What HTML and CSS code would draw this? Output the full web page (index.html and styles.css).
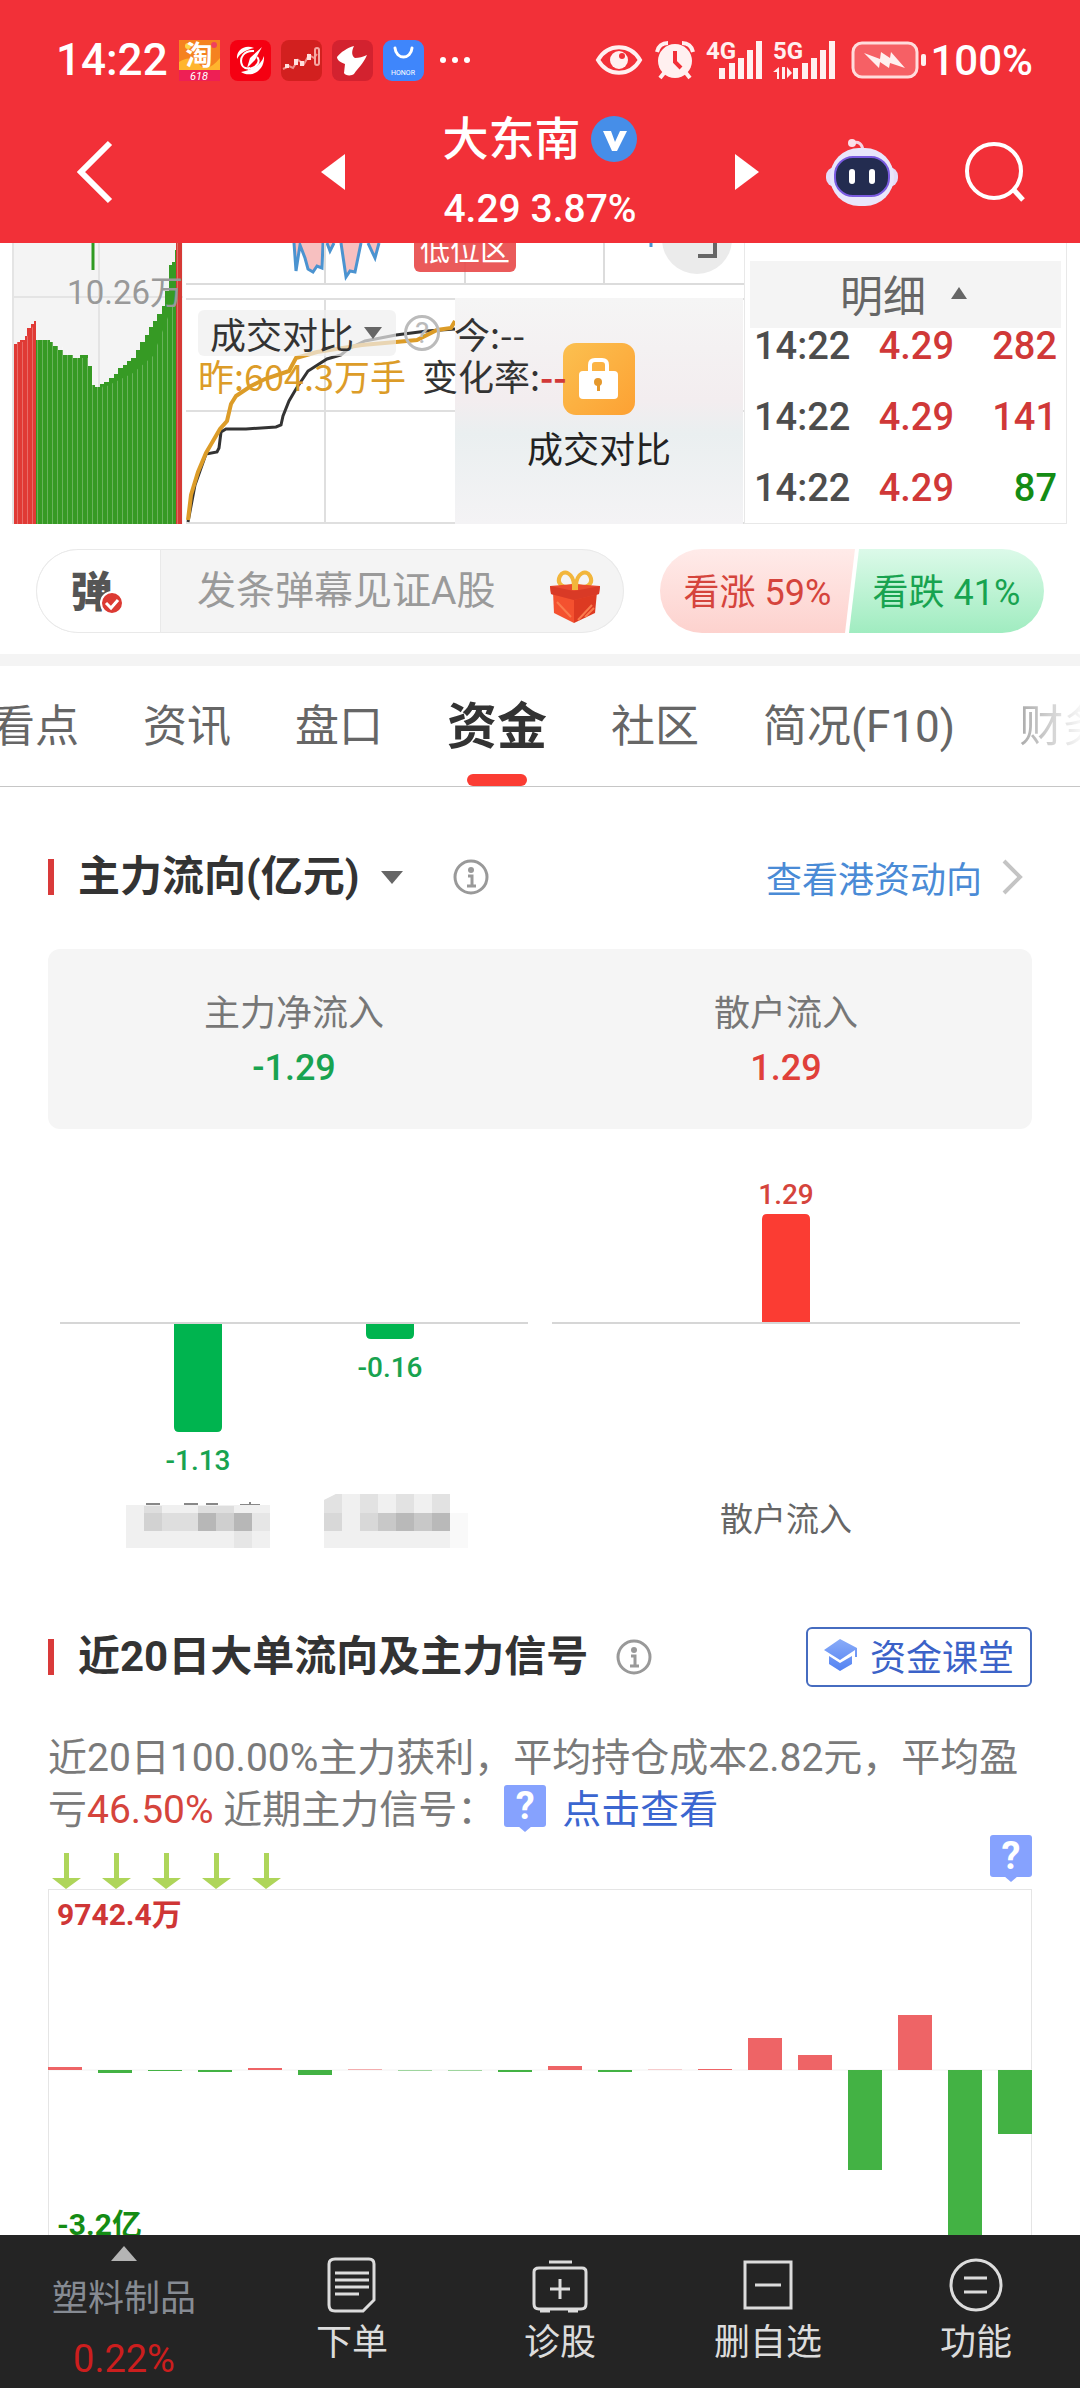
FILE: index.html
```html
<!DOCTYPE html>
<html lang="zh-CN">
<head>
	<meta charset="UTF-8">
	<meta name="viewport" content="width=device-width">
	<title>大东南 资金</title>
	<link rel="stylesheet" href="styles.css">
</head>
<body>
	<header class="top">
		<div class="status">
			<span class="clock">14:22</span>
			<div class="apps">
				<svg width="41" height="41" viewBox="0 0 41 41">
					<rect width="41" height="41" fill="#f58220"/>
					<path d="M0 22q12-8 20 2t21-6v13H0z" fill="#ffb52e"/>
					<circle cx="9" cy="6" r="3" fill="#ffd54a"/>
					<circle cx="35" cy="5" r="3" fill="#f0405c"/>
					<rect y="30" width="41" height="11" fill="#ee1f55"/>
					<text x="20" y="25" class="tao">淘</text>
					<text x="20" y="40" class="tiny">618</text>
				</svg>
				<svg width="41" height="41" viewBox="0 0 41 41">
					<rect width="41" height="41" rx="8" fill="#f50012"/>
					<path d="M24 8C15 4 6 10 7 19c3-6 9-9 17-11z" fill="#fff"/>
					<path d="M11 32c9 6 24 0 23-16-3 9-11 14-23 16z" fill="#fff"/>
					<path d="M24 11C14 10 9 18 12 25c1 3 5 4 8 3M27 17c4 4 0 11-9 12" fill="none" stroke="#fff" stroke-width="2"/>
					<path d="M32 7L20 18l-3 10 8-8z" fill="#fff"/>
				</svg>
				<svg width="41" height="41" viewBox="0 0 41 41">
					<rect width="41" height="41" rx="8" fill="#d2201f"/>
					<path d="M2 29l6-3 4 2 5-8 6 4 5-9 5 3 3-4" fill="none" stroke="#f0908c" stroke-width="2"/>
					<path d="M6 24v4M15 19v6M21 21v5M28 14v6" stroke="#ffe0de" stroke-width="4"/>
					<rect x="34" y="8" width="4" height="17" rx="2" fill="none" stroke="#f6a8a4" stroke-width="2"/>
				</svg>
				<svg width="41" height="41" viewBox="0 0 41 41">
					<rect width="41" height="41" rx="8" fill="#d3222f"/>
					<path d="M22 6c-3 6-2 10 1 12 4 0 8-1 12-3-4 9-9 13-13 19-2 2-9 2-10-1l1-9c-5-2-8-4-8-7 4-5 10-9 17-11z" fill="#fff"/>
				</svg>
				<svg width="41" height="41" viewBox="0 0 41 41">
					<rect width="41" height="41" rx="9" fill="#3f86fb"/>
					<path d="M12 8c1 12 16 12 17 0" fill="none" stroke="#fff" stroke-width="3" stroke-linecap="round"/>
					<text x="20" y="35" class="honor">HONOR</text>
				</svg>
			</div>
			<svg class="more" width="30" height="8" viewBox="0 0 30 8" fill="#fff"><circle cx="3" cy="4" r="3"/><circle cx="15" cy="4" r="3"/><circle cx="27" cy="4" r="3"/></svg>
			<svg class="eye" width="46" height="32" viewBox="0 0 46 32">
				<path d="M2 16C12-1 34-1 44 16 34 33 12 33 2 16z" fill="none" stroke="#fff0f0" stroke-width="4"/>
				<circle cx="23" cy="16" r="9" fill="#fff0f0"/><circle cx="26" cy="12" r="3" fill="#f23038"/>
			</svg>
			<svg class="alarm" width="38" height="38" viewBox="0 0 38 38">
				<circle cx="19" cy="20" r="17" fill="#fff0f0"/>
				<path d="M1 11q2-9 11-9M37 11q-2-9-11-9M8 32l-4 5M30 32l4 5" stroke="#fff0f0" stroke-width="4" fill="none"/>
				<path d="M19 10v11l6 6" stroke="#f23038" stroke-width="4" fill="none"/>
			</svg>
			<svg class="signal4" width="58" height="38" viewBox="0 0 58 38" fill="#fff0f0">
				<text x="0" y="18">4G</text>
				<path d="M13 27h6v11h-6zM23 22h6v16h-6zM32 17h6v21h-6zM41 9h6v29h-6zM50 0h6v38h-6z"/>
			</svg>
			<svg class="signal5" width="64" height="38" viewBox="0 0 64 38" fill="#fff0f0">
				<text x="0" y="18">5G</text>
				<path d="M0 31l6-5v12H4v-7zM9 26h3v12H9zM14 26l5 6-5 5zM20 27h5v11h-5zM29 22h6v16h-6zM38 17h6v21h-6zM47 9h6v29h-6zM56 0h6v38h-6z"/>
			</svg>
			<svg class="battery" width="76" height="38" viewBox="0 0 76 38">
				<rect x="2" y="2" width="64" height="34" rx="9" fill="#f66065" stroke="#ffdcdc" stroke-width="3"/>
				<path d="M13 12l16 6 1-7 9 6 1-6 14 16-15-5-1 5-9-6-1 6z" fill="#fff0f0"/>
				<rect x="70" y="13" width="5" height="12" rx="2" fill="#fff0f0"/>
			</svg>
			<span class="clock level">100%</span>
		</div>
		<nav class="title-bar">
			<div class="side left">
				<button aria-label="返回"><svg width="36" height="64" viewBox="0 0 36 64"><path d="M33 3L4 32l29 29" fill="none" stroke="#fff" stroke-width="6"/></svg></button>
				<button aria-label="上一只"><svg width="24" height="36" viewBox="0 0 24 36"><path d="M24 0v36L0 18z" fill="#fff"/></svg></button>
			</div>
			<div class="stock">
				<h1>大东南
					<svg width="47" height="47" viewBox="0 0 47 47"><circle cx="23" cy="23" r="23" fill="#468ee8"/><path d="M12 15h8l4 11 5-11h7L26 35h-5z" fill="#fff"/></svg>
				</h1>
				<p>4.29 3.87%</p>
			</div>
			<div class="side right">
				<button aria-label="下一只"><svg width="24" height="36" viewBox="0 0 24 36"><path d="M0 0v36l24-18z" fill="#fff"/></svg></button>
				<button aria-label="助手">
					<svg width="72" height="68" viewBox="0 0 72 68">
						<path d="M26 5q10-3 11 8" fill="none" stroke="#f6d3e2" stroke-width="3"/>
						<circle cx="26" cy="5" r="4" fill="#fbe0ea"/>
						<rect x="0" y="29" width="72" height="20" rx="9" fill="#e4dcf8"/>
						<rect x="4" y="10" width="64" height="58" rx="29" fill="#e9e6fb"/>
						<rect x="9" y="19" width="54" height="39" rx="18" fill="#232c50" stroke="#7a5be0" stroke-width="2"/>
						<rect x="23" y="31" width="6" height="15" rx="3" fill="#fff"/><rect x="43" y="31" width="6" height="15" rx="3" fill="#fff"/>
					</svg>
				</button>
				<button aria-label="搜索"><svg width="60" height="60" viewBox="0 0 60 60"><circle cx="29" cy="29" r="27" fill="none" stroke="#fff" stroke-width="4"/><path d="M48 47l10 11" stroke="#fff" stroke-width="5"/></svg></button>
			</div>
		</nav>
	</header>

	<main>
		<section class="quotes">
			<div class="volume">
				<svg viewBox="0 0 171 281" preserveAspectRatio="none">
					<defs>
						<pattern id="stripe" width="5" height="10" patternUnits="userSpaceOnUse"><rect width="1" height="10" fill="#fff" opacity=".25"/></pattern>
					</defs>
					<path d="M0 54h171M87 0v281M1 0v281" stroke="#e4e4e4" stroke-width="2"/>
					<path d="M81 0v27" stroke="#2f9a22" stroke-width="3"/>
					<path d="M2 281V101h3v-2h3v-2h5v-4h2v-8h4v-4h3v-3h2v203z" fill="#e03a35"/>
					<path d="M24 281V78v19h14v2h3v4h5v4h5v5h10v3h7v-3h8v11h4v19h3v2h5v-3h4v-2h5v-4h5v-4h4v-6h5v-3h4v-4h4v-3h5v-8h4v-8h5v-7h4v-8h4v-6h4v-7h5v-8h3v-15h4v-26h3V19h3V7h3v274z" fill="#369a24"/>
					<path d="M164 0h6v281h-6z" fill="#d63a35"/>
					<path d="M2 281V99h10l12-21v19h17l25 18h10l15 30 30-15 20-17 23-60V0h6v281z" fill="url(#stripe)"/>
				</svg>
				<span class="vol-label">10.26万</span>
			</div>
			<div class="middle">
				<div class="signal-chart">
					<svg viewBox="0 0 558 42" preserveAspectRatio="none">
						<path d="M108 0l2 28 4-26 5 13 3 11 5 3 4-6 5 2 1-25zM141 0l3 8 4-8zM155 0l5 34 4-6 5 1 6-29zM182 0l7 15 4-15z" fill="#f7c0c0"/>
						<path d="M108 0l2 28 4-26 5 13 3 11 5 3 4-6 5 2 1-25M141 0l3 8 4-8M155 0l5 34 4-6 5 1 6-29M182 0l7 15 4-15M465 0v4" fill="none" stroke="#4b93d0" stroke-width="3"/>
						<path d="M139 0v41M279 0v41M418 0v41M0 41h558" stroke="#dcdcdc" stroke-width="2"/>
						<circle cx="511" cy="-4" r="35" fill="#ebebeb"/>
						<path d="M512 13h17V0" fill="none" stroke="#666" stroke-width="4"/>
					</svg>
					<span class="tag">低位区</span>
				</div>
				<div class="compare">
					<svg viewBox="0 0 558 226" preserveAspectRatio="none">
						<path d="M0 1h558M0 113h558M0 225h558M139 0v226M279 0v226" stroke="#dfdfdf" stroke-width="2"/>
						<path d="M2 224l7-37 11-31 11-2 2-4 2-16 5-3h20l30-2 5-2 2-9 6-15 7-12 12-18 19-12 14-4 7-6 17-8 31-6 31-4 28-2" fill="none" stroke="#333" stroke-width="3"/>
						<path d="M2 222l3-25 7-23 8-19 7-12 7-12 7-8 4-17 5-8 15-10 14-7 24-8 7-13 21-6 45-7 34-3 21-2 20-10 14-2 4-7" fill="none" stroke="#dc9c28" stroke-width="4"/>
					</svg>
					<div class="locked">
						<svg width="72" height="72" viewBox="0 0 72 72">
							<defs><linearGradient id="gold" x2="1" y2="1"><stop stop-color="#fbc050"/><stop offset="1" stop-color="#fda133"/></linearGradient></defs>
							<rect width="72" height="72" rx="13" fill="url(#gold)"/>
							<path d="M27 30v-8q0-5 5-5h7q5 0 5 5v8" fill="none" stroke="#fff" stroke-width="4"/>
							<rect x="16" y="28" width="39" height="28" rx="4" fill="#fff"/>
							<circle cx="35" cy="39" r="4" fill="#e5982c"/><path d="M34 39h3v9h-3z" fill="#e5982c"/>
						</svg>
						<span>成交对比</span>
					</div>
					<div class="legend">
						<div class="line">
							<button class="picker">成交对比 <i class="tri-down"></i></button>
							<span class="help">?</span>
							<span>今:--</span>
						</div>
						<div class="line">
							<span class="gold">昨:604.3万手</span>
							<span>变化率:<b>--</b></span>
						</div>
					</div>
				</div>
			</div>
			<div class="trades">
				<button class="trades-head">明细 <svg width="16" height="12" viewBox="0 0 16 12"><path d="M8 0l8 12H0z" fill="#666"/></svg></button>
				<div class="trades-list">
					<table>
						<tr><td>14:22</td><td class="up">4.29</td><td class="up">282</td></tr>
						<tr><td>14:22</td><td class="up">4.29</td><td class="up">141</td></tr>
						<tr><td>14:22</td><td class="up">4.29</td><td class="down">87</td></tr>
					</table>
				</div>
			</div>
		</section>

		<section class="danmu">
			<div class="danmu-box">
				<button class="danmu-switch" aria-label="弹幕开关">弹
					<svg width="24" height="24" viewBox="0 0 24 24"><circle cx="12" cy="12" r="11" fill="#dc3a33" stroke="#fff" stroke-width="2"/><path d="M6 12l5 5 7-8" fill="none" stroke="#fff" stroke-width="3"/></svg>
				</button>
				<input type="text" aria-label="弹幕" placeholder="发条弹幕见证A股">
				<svg class="gift" width="50" height="54" viewBox="0 0 50 54">
					<path d="M24 15C14 20 6 14 10 6c4-7 13-3 14 9zM26 15c10 5 18-1 14-9-4-7-13-3-14 9z" fill="none" stroke="#f2b63c" stroke-width="4"/>
					<path d="M3 22l21 7v24L4 43z" fill="#f4512f"/><path d="M47 22l-23 7v24l21-10z" fill="#dd3a22"/>
					<path d="M0 16l24-2 26 2-1 8-25 6L1 24z" fill="#ea4a2e"/>
					<path d="M0 16l24 5 26-5-1 8-25 6L1 24z" fill="#d93a26"/>
					<path d="M28 50l14-15M35 47l9-9M7 32l14 15" stroke="#fa7a4c" stroke-width="2"/>
					<path d="M22 11h6v9h-6z" fill="#f2b63c"/>
				</svg>
			</div>
			<div class="vote">
				<button class="bull">看涨 59%</button>
				<button class="bear">看跌 41%</button>
			</div>
		</section>

		<nav class="tabs">
			<a href="#">看点</a>
			<a href="#">资讯</a>
			<a href="#">盘口</a>
			<a href="#" class="active">资金</a>
			<a href="#">社区</a>
			<a href="#">简况(F10)</a>
			<a href="#">财务</a>
		</nav>

		<section class="block">
			<div class="block-head">
				<h2>主力流向(亿元)</h2>
				<i class="tri-down"></i>
				<svg class="info" width="36" height="36" viewBox="0 0 36 36"><circle cx="18" cy="18" r="16" fill="none" stroke="#999" stroke-width="3"/><circle cx="18" cy="11" r="3" fill="#999"/><path d="M15 17h4v10M14 27h9" fill="none" stroke="#999" stroke-width="3"/></svg>
				<a href="#" class="hk">查看港资动向
					<svg width="22" height="36" viewBox="0 0 22 36"><path d="M2 2l16 16L2 34" fill="none" stroke="#c4c4c4" stroke-width="4"/></svg>
				</a>
			</div>
			<dl class="summary">
				<div><dt>主力净流入</dt><dd class="green">-1.29</dd></div>
				<div><dt>散户流入</dt><dd class="red">1.29</dd></div>
			</dl>
			<svg class="flow" viewBox="0 0 984 438">
				<path d="M12 194h468M504 194h468" stroke="#d6d6d6" stroke-width="2"/>
				<path d="M126 195h48v103q0 5-5 5h-38q-5 0-5-5zM318 195h48v10q0 5-5 5h-38q-5 0-5-5z" fill="#00b44f"/>
				<path d="M714 193V90q0-5 5-5h38q5 0 5 5v103z" fill="#fb3c33"/>
				<g class="num">
					<text x="738" y="75" fill="#d5443c">1.29</text>
					<text x="150" y="341" fill="#18a350">-1.13</text>
					<text x="342" y="248" fill="#18a350">-0.16</text>
				</g>
				<text x="738" y="402" class="name">散户流入</text>
				<!-- 马赛克 -->
				<path d="M98 375h14M136 375h14M158 375h12M192 376h20M202 373v6" stroke="#888" stroke-width="2"/>
				<g>
					<path d="M78 376h144v43H78z" fill="#f0f0f0"/>
					<path d="M96 377h18v7H96zM150 377h36v7h-36z" fill="#dedede"/>
					<path d="M96 384h18v18H96z" fill="#d2d2d2"/><path d="M114 384h36v18h-36z" fill="#dedede"/>
					<path d="M150 384h18v18h-18zM186 384h18v18h-18z" fill="#b7b7b7"/><path d="M168 384h18v18h-18z" fill="#cfcfcf"/>
					<path d="M204 384h18v18h-18zM186 402h18v17h-18z" fill="#e6e6e6"/>
				</g>
				<g>
					<path d="M276 371l12-6h114v54H276z" fill="#f0f0f0"/>
					<path d="M276 371l12-6h6v19h-18zM312 365h18v19h-18zM348 365h18v19h-18zM384 365h18v19h-18z" fill="#e2e2e2"/>
					<path d="M276 384h18v18h-18zM312 384h18v18h-18z" fill="#d8d8d8"/><path d="M330 384h18v18h-18zM366 384h18v18h-18z" fill="#c8c8c8"/>
					<path d="M348 384h18v18h-18zM384 384h18v18h-18z" fill="#b9b9b9"/><path d="M402 384h18v35h-18z" fill="#f9f9f9"/>
				</g>
			</svg>
		</section>

		<section class="block">
			<div class="block-head">
				<h2>近20日大单流向及主力信号</h2>
				<svg class="info near" width="36" height="36" viewBox="0 0 36 36"><circle cx="18" cy="18" r="16" fill="none" stroke="#999" stroke-width="3"/><circle cx="18" cy="11" r="3" fill="#999"/><path d="M15 17h4v10M14 27h9" fill="none" stroke="#999" stroke-width="3"/></svg>
				<button class="lesson">
					<svg width="34" height="32" viewBox="0 0 34 32">
						<defs><linearGradient id="cap" x2="0" y2="1"><stop stop-color="#8aacf8"/><stop offset="1" stop-color="#5382f2"/></linearGradient></defs>
						<path d="M16 0l17 9v9h-2v-7L16 21 0 11zM5 17l11 7 12-7v8l-12 7-11-7z" fill="url(#cap)"/>
					</svg>
					资金课堂
				</button>
			</div>
			<p class="desc">近20日100.00%主力获利，平均持仓成本2.82元，平均盈亏<em>46.50%</em> 近期主力信号：<span class="mark">?</span><a href="#">点击查看</a></p>
			<div class="signals">
				<svg width="242" height="36" viewBox="0 0 242 36">
					<defs><path id="arrow" d="M12 0h5v25h12L14 36 0 25h12z" fill="#aed55a"/></defs>
					<use href="#arrow" x="4"/><use href="#arrow" x="54"/><use href="#arrow" x="104"/><use href="#arrow" x="154"/><use href="#arrow" x="204"/>
				</svg>
				<span class="mark">?</span>
			</div>
			<div class="big-orders">
				<span class="max">9742.4万</span>
				<svg viewBox="0 0 984 380">
					<path d="M0 180h984" stroke="#f2f2f2" stroke-width="1"/>
					<g fill="#ee6466">
						<rect x="0" y="177" width="34" height="3"/><rect x="200" y="178" width="34" height="2"/>
						<rect x="300" y="179" width="34" height="1" opacity=".5"/><rect x="500" y="176" width="34" height="4"/>
						<rect x="600" y="179" width="34" height="1" opacity=".3"/><rect x="650" y="179" width="34" height="1"/>
						<rect x="700" y="148" width="34" height="32"/><rect x="750" y="165" width="34" height="15"/>
						<rect x="850" y="125" width="34" height="55"/>
					</g>
					<g fill="#43b244">
						<rect x="50" y="180" width="34" height="3"/><rect x="100" y="180" width="34" height="1"/>
						<rect x="150" y="180" width="34" height="2"/><rect x="250" y="180" width="34" height="5"/>
						<rect x="350" y="180" width="34" height="1" opacity=".5"/><rect x="400" y="180" width="34" height="1" opacity=".5"/>
						<rect x="450" y="180" width="34" height="2"/><rect x="550" y="180" width="34" height="2"/>
						<rect x="800" y="180" width="34" height="100"/><rect x="900" y="180" width="34" height="180"/>
						<rect x="950" y="180" width="34" height="64"/>
					</g>
				</svg>
				<span class="min">-3.2亿</span>
			</div>
		</section>
	</main>

	<footer class="bottom">
		<a href="#" class="sector">
			<svg width="26" height="15" viewBox="0 0 26 15"><path d="M13 0l13 15H0z" fill="#b4b4b4"/></svg>
			<span>塑料制品</span>
			<span class="pct">0.22%</span>
		</a>
		<a href="#">
			<svg viewBox="0 0 56 56"><path d="M11 2h34q5 0 5 5v36L39 54H11q-6 0-6-6V7q0-5 6-5zM11 16h34M11 23h34M11 30h34M11 37h24"/></svg>
			下单
		</a>
		<a href="#">
			<svg viewBox="0 0 56 56"><path d="M17 5h23M7 11h43q4 0 4 4v32q0 5-5 5H7q-5 0-5-5V15q0-4 5-4zM28 22v20M18 32h20M8 54h10M36 54h10"/></svg>
			诊股
		</a>
		<a href="#">
			<svg viewBox="0 0 56 56"><path d="M5 5h46v46H5zM15 28h26"/></svg>
			删自选
		</a>
		<a href="#">
			<svg viewBox="0 0 56 56"><circle cx="28" cy="28" r="25"/><path d="M16 21h23M16 35h23"/></svg>
			功能
		</a>
	</footer>
</body>
</html>
```
FILE: styles.css
```css
* {
	box-sizing: border-box;
	margin: 0;
	padding: 0;
}
body {
	background: #fff;
	color: #333;
	display: flex;
	flex-direction: column;
	font-family: Roboto, "Noto Sans CJK SC", sans-serif;
	font-size: 36px;
	height: 100vh;
	overflow: hidden;
}
button {
	background: none;
	border: none;
	color: inherit;
	font: inherit;
	cursor: pointer;
}
a {
	color: inherit;
	text-decoration: none;
}
svg {
	display: block;
	flex: none;
}
main {
	flex: 1;
	min-height: 0;
	overflow: hidden;
}
.red { color: #e0403a; }
.green { color: #18a350; }

/* header */
.top {
	background: #f23038;
	color: #fff;
	flex: none;
}
.status {
	align-items: center;
	display: flex;
	height: 100px;
	padding: 20px 47px 0 56px;
}
.status svg { overflow: visible; }
.status .clock {
	font-size: 44px;
	font-weight: 500;
}
.status .level { font-size: 42px; }
.apps {
	display: flex;
	gap: 10px;
	margin-left: 11px;
}
.tao {
	fill: #fff;
	font-size: 27px;
	font-weight: 700;
	text-anchor: middle;
}
.tiny {
	fill: #fff;
	font-size: 11px;
	font-style: italic;
	text-anchor: middle;
}
.honor {
	fill: #fff;
	font-size: 7px;
	text-anchor: middle;
}
.more { margin-left: 16px; }
.eye { margin-left: auto; }
.alarm { margin-left: 14px; }
.signal4, .signal5 {
	font-size: 24px;
	font-weight: 700;
	margin-left: 12px;
}
.signal5 { margin-left: 9px; }
.battery { margin: 0 3px 0 14px; }

.title-bar {
	display: grid;
	grid-template-columns: 1fr 390px 1fr;
	height: 143px;
}
.side {
	align-items: center;
	display: flex;
	justify-content: space-between;
}
.side.left { padding-left: 77px; }
.side.right { padding-right: 55px; }
.stock {
	text-align: center;
}
.stock h1 {
	align-items: center;
	display: flex;
	font-size: 46px;
	font-weight: 500;
	gap: 10px;
	justify-content: center;
	line-height: 78px;
}
.stock p {
	font-size: 39px;
	font-weight: 500;
	line-height: 62px;
}

/* quotes */
.quotes {
	display: grid;
	grid-template-columns: 174fr 558fr 323fr;
	height: 281px;
	padding: 0 13px 0 12px;
}
.volume {
	background: #f4f4f4;
	margin-right: 3px;
	position: relative;
}
.volume svg, .signal-chart svg, .compare > svg {
	height: 100%;
	width: 100%;
}
.vol-label {
	color: #999;
	font-size: 33px;
	line-height: 40px;
	position: absolute;
	right: 0; top: 30px;
}
.middle {
	display: flex;
	flex-direction: column;
	gap: 13px;
}
.signal-chart {
	height: 42px;
	overflow: hidden;
	position: relative;
}
.tag {
	background: rgba(232, 72, 72, 0.9);
	border-radius: 6px;
	bottom: 13px; left: 228px;
	color: #fff;
	font-size: 30px;
	line-height: 44px;
	padding: 0 6px;
	position: absolute;
}
.compare {
	flex: 1;
	min-height: 0;
	position: relative;
}
.locked {
	align-items: center;
	background: linear-gradient(#f5f5f5, #f3edef 45%, #eaeff0 60%, #f4f3f5);
	bottom: 0; right: 1px; top: 0;
	color: #222;
	display: flex;
	flex-direction: column;
	gap: 10px;
	line-height: 52px;
	padding-top: 45px;
	position: absolute;
	width: 288px;
}
.legend {
	font-family: "Noto Sans CJK SC", sans-serif;
	left: 12px; top: 12px;
	line-height: 46px;
	position: absolute;
}
.legend .line {
	align-items: center;
	display: flex;
	gap: 16px;
	height: 38px;
	white-space: nowrap;
}
.legend .line:first-child {
	gap: 8px;
	height: 46px;
}
.legend b { color: #d23838; }
.picker {
	align-items: center;
	background: rgba(238, 238, 238, 0.7);
	border-radius: 6px;
	display: flex;
	gap: 10px;
	padding: 0 12px;
	width: 198px;
}
.tri-down {
	border: solid transparent;
	border-top-color: #666;
	border-width: 13px 11px 0;
	flex: none;
}
.picker .tri-down { border-width: 12px 9px 0; }
.help {
	border: 3px solid #bbb;
	border-radius: 50%;
	color: #bbb;
	font-family: Roboto, sans-serif;
	font-size: 30px;
	height: 36px;
	line-height: 30px;
	margin-right: 6px;
	text-align: center;
	width: 36px;
}
.gold { color: #dc9c28; }

.trades {
	border: 1px solid #e8e8e8;
	border-top: none;
	padding: 18px 5px 0;
}
.trades-head {
	align-items: center;
	background: #f4f4f4;
	color: #666;
	display: flex;
	font-size: 43px;
	gap: 25px;
	height: 67px;
	justify-content: center;
	padding: 0 4px 3px 0;
	width: 100%;
}
.trades-list {
	height: 195px;
	overflow: hidden;
}
.trades-list table {
	border-collapse: collapse;
	font-size: 38px;
	font-weight: 500;
	margin-top: -18px;
	width: 100%;
}
.trades-list td {
	color: #4d4d4d;
	height: 71px;
	padding: 0 4px;
}
.trades-list td.up { color: #d03838; }
.trades-list td.down { color: #148c14; }
.trades-list td:last-child { text-align: right; }

/* danmu */
.danmu {
	border-bottom: 12px solid #f4f4f4;
	display: flex;
	gap: 36px;
	padding: 25px 36px 21px;
}
.danmu-box {
	align-items: center;
	background: #f4f4f4;
	border-radius: 42px;
	box-shadow: inset 0 0 0 1px #e9e9e9;
	display: flex;
	flex: 588;
	height: 84px;
	min-width: 0;
	overflow: hidden;
}
.danmu-switch {
	background: #fff;
	border: 1px solid #e9e9e9;
	border-radius: 42px 0 0 42px;
	color: #555;
	font-size: 42px;
	font-weight: 900;
	height: 100%;
	padding: 0 14px 6px 0;
	position: relative;
	width: 125px;
}
.danmu-switch svg {
	left: 63px; top: 41px;
	position: absolute;
}
.danmu-box input {
	background: none;
	border: none;
	flex: 1;
	font: inherit;
	font-size: 39px;
	height: 100%;
	min-width: 0;
	padding-left: 36px;
}
.danmu-box input::placeholder { color: #9a9a9a; }
.gift { margin: 12px 24px 0 0; }
.vote {
	border-radius: 42px;
	display: flex;
	flex: 384;
	overflow: hidden;
}
.vote button {
	padding-bottom: 4px;
	white-space: nowrap;
}
.bull {
	background: linear-gradient(#ffebe9, #fdd2ce);
	clip-path: polygon(0 0, 100% 0, calc(100% - 10px) 100%, 0 100%);
	color: #d5443c;
	flex: 195;
}
.bear {
	background: linear-gradient(#dcfae9, #a0ecc0);
	clip-path: polygon(10px 0, 100% 0, 100% 100%, 0 100%);
	color: #18a350;
	flex: 195;
	margin-left: -6px;
}

/* tabs */
.tabs {
	border-bottom: 1px solid #c6c6c6;
	color: #666;
	display: flex;
	font-size: 44px;
	gap: 64px;
	height: 121px;
	line-height: 122px;
	margin-left: -9px;
	overflow: hidden;
	white-space: nowrap;
}
.tabs a { flex: none; }
.tabs .active {
	color: #333;
	font-size: 50px;
	font-weight: 700;
	position: relative;
}
.tabs .active::after {
	background: #fb3c33;
	border-radius: 6px;
	bottom: 0; left: 20px; right: 20px;
	content: "";
	height: 12px;
	position: absolute;
}
.tabs a:last-child {
	background: linear-gradient(90deg, #aaa, #fff 68px);
	-webkit-background-clip: text;
	background-clip: text;
	color: transparent;
}

/* blocks */
.block { padding: 60px 48px 0; }
.block-head {
	align-items: center;
	display: flex;
	height: 60px;
	margin-bottom: 42px;
}
.block-head::before {
	background: #d93a3a;
	content: "";
	height: 36px;
	width: 6px;
}
.block-head h2 {
	font-size: 42px;
	font-weight: 700;
	line-height: 60px;
	margin: 0 22px 0 24px;
}
.block-head .info { margin-left: 50px; }
.block-head .info.near { margin-left: 6px; }
.hk {
	align-items: center;
	color: #4a8bd6;
	display: flex;
	gap: 20px;
	margin-left: auto;
	padding-right: 8px;
}
.summary {
	background: #f5f5f5;
	border-radius: 12px;
	display: flex;
	height: 180px;
	padding-top: 38px;
	text-align: center;
}
.summary > div { flex: 1; }
.summary dt {
	color: #777;
	line-height: 54px;
}
.summary dd {
	font-weight: 500;
	line-height: 54px;
}
.flow {
	height: auto;
	width: 100%;
}
.flow .num {
	font-size: 28px;
	font-weight: 500;
	text-anchor: middle;
}
.flow .name {
	fill: #666;
	font-size: 33px;
	text-anchor: middle;
}
.lesson {
	align-items: center;
	border: 2px solid #466cc0;
	border-radius: 6px;
	color: #3b62c8;
	display: flex;
	gap: 12px;
	height: 60px;
	margin-left: auto;
	padding: 0 16px 4px;
}
.desc {
	color: #7a7a7a;
	font-size: 39px;
	line-height: 52px;
	padding-top: 3px;
}
.desc em {
	color: #d5443c;
	font-style: normal;
}
.desc a { color: #3b66d0; }
.mark {
	background: #86a2fe;
	border-radius: 3px;
	color: #fff;
	display: inline-block;
	font-size: 38px;
	font-weight: 700;
	height: 42px;
	line-height: 42px;
	position: relative;
	text-align: center;
	width: 42px;
}
.desc .mark {
	margin: 0 16px 0 8px;
	vertical-align: bottom;
	margin-bottom: 9px;
}
.mark::after {
	border: solid transparent;
	border-top-color: #86a2fe;
	border-width: 6px 7px 0;
	content: "";
	left: 14px; top: 41px;
	position: absolute;
}
.signals {
	align-items: flex-end;
	display: flex;
	height: 53px;
	justify-content: space-between;
}
.signals .mark { margin-bottom: 12px; }
.big-orders {
	border: 1px solid #e5e5e5;
	position: relative;
}
.big-orders svg {
	height: auto;
	margin: 0 -1px;
	width: calc(100% + 2px);
}
.big-orders span {
	font-size: 30px;
	font-weight: 700;
	left: 8px;
	line-height: 40px;
	position: absolute;
}
.big-orders .max { color: #cf3636; top: 5px; }
.big-orders .min { color: #148c14; top: 315px; }

/* bottom bar */
.bottom {
	background: #242424;
	color: #dcdcdc;
	display: grid;
	flex: none;
	grid-template-columns: 248px repeat(4, 1fr);
	height: 153px;
	z-index: 1;
}
.bottom a {
	align-items: center;
	display: flex;
	flex-direction: column;
	line-height: 60px;
	padding-top: 22px;
}
.bottom a svg {
	fill: none;
	height: 56px;
	stroke: #dcdcdc;
	stroke-width: 3;
	width: 56px;
}
.bottom .sector {
	color: #868b93;
	padding: 11px 0 0;
}
.bottom .sector svg {
	height: 15px;
	margin-bottom: 8px;
	stroke: none;
	width: 26px;
}
.bottom .pct {
	color: #cc1e1e;
	font-size: 38px;
}
```
